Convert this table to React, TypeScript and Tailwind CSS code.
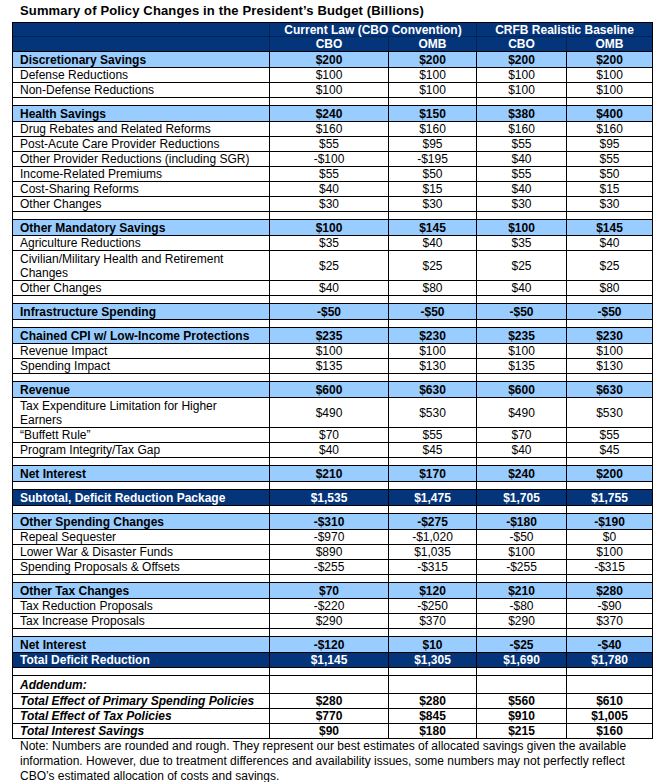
import React from "react";

type Kind = "sec" | "item" | "blank" | "navy" | "addHead" | "add";

type Row = {
  kind: Kind;
  label?: React.ReactNode;
  vals?: string[];
  h?: string;
};

const rows: Row[] = [
  { kind: "sec", label: "Discretionary Savings", vals: ["$200", "$200", "$200", "$200"] },
  { kind: "item", label: "Defense Reductions", vals: ["$100", "$100", "$100", "$100"] },
  { kind: "item", label: "Non-Defense Reductions", vals: ["$100", "$100", "$100", "$100"] },
  { kind: "blank" },
  { kind: "sec", label: "Health Savings", vals: ["$240", "$150", "$380", "$400"] },
  { kind: "item", label: "Drug Rebates and Related Reforms", vals: ["$160", "$160", "$160", "$160"] },
  { kind: "item", label: "Post-Acute Care Provider Reductions", vals: ["$55", "$95", "$55", "$95"] },
  { kind: "item", label: "Other Provider Reductions (including SGR)", vals: ["-$100", "-$195", "$40", "$55"] },
  { kind: "item", label: "Income-Related Premiums", vals: ["$55", "$50", "$55", "$50"] },
  { kind: "item", label: "Cost-Sharing Reforms", vals: ["$40", "$15", "$40", "$15"] },
  { kind: "item", label: "Other Changes", vals: ["$30", "$30", "$30", "$30"] },
  { kind: "blank" },
  { kind: "sec", label: "Other Mandatory Savings", vals: ["$100", "$145", "$100", "$145"] },
  { kind: "item", label: "Agriculture Reductions", vals: ["$35", "$40", "$35", "$40"] },
  {
    kind: "item",
    h: "h-[30px]",
    label: (
      <>
        Civilian/Military Health and Retirement
        <br />
        Changes
      </>
    ),
    vals: ["$25", "$25", "$25", "$25"],
  },
  { kind: "item", label: "Other Changes", vals: ["$40", "$80", "$40", "$80"] },
  { kind: "blank" },
  { kind: "sec", label: "Infrastructure Spending", vals: ["-$50", "-$50", "-$50", "-$50"] },
  { kind: "blank" },
  { kind: "sec", label: "Chained CPI w/ Low-Income Protections", vals: ["$235", "$230", "$235", "$230"] },
  { kind: "item", label: "Revenue Impact", vals: ["$100", "$100", "$100", "$100"] },
  { kind: "item", label: "Spending Impact", vals: ["$135", "$130", "$135", "$130"] },
  { kind: "blank" },
  { kind: "sec", label: "Revenue", vals: ["$600", "$630", "$600", "$630"] },
  {
    kind: "item",
    h: "h-[30px]",
    label: (
      <>
        Tax Expenditure Limitation for Higher
        <br />
        Earners
      </>
    ),
    vals: ["$490", "$530", "$490", "$530"],
  },
  { kind: "item", label: "\u201CBuffett Rule\u201D", vals: ["$70", "$55", "$70", "$55"] },
  { kind: "item", label: "Program Integrity/Tax Gap", vals: ["$40", "$45", "$40", "$45"] },
  { kind: "blank" },
  { kind: "sec", label: "Net Interest", vals: ["$210", "$170", "$240", "$200"] },
  { kind: "blank" },
  { kind: "navy", h: "h-[16px]", label: "Subtotal, Deficit Reduction Package", vals: ["$1,535", "$1,475", "$1,705", "$1,755"] },
  { kind: "blank" },
  { kind: "sec", label: "Other Spending Changes", vals: ["-$310", "-$275", "-$180", "-$190"] },
  { kind: "item", label: "Repeal Sequester", vals: ["-$970", "-$1,020", "-$50", "$0"] },
  { kind: "item", label: "Lower War & Disaster Funds", vals: ["$890", "$1,035", "$100", "$100"] },
  { kind: "item", label: "Spending Proposals & Offsets", vals: ["-$255", "-$315", "-$255", "-$315"] },
  { kind: "blank" },
  { kind: "sec", label: "Other Tax Changes", vals: ["$70", "$120", "$210", "$280"] },
  { kind: "item", label: "Tax Reduction Proposals", vals: ["-$220", "-$250", "-$80", "-$90"] },
  { kind: "item", label: "Tax Increase Proposals", vals: ["$290", "$370", "$290", "$370"] },
  { kind: "blank" },
  { kind: "sec", label: "Net Interest", vals: ["-$120", "$10", "-$25", "-$40"] },
  { kind: "navy", h: "h-[15px]", label: "Total Deficit Reduction", vals: ["$1,145", "$1,305", "$1,690", "$1,780"] },
  { kind: "blank" },
  { kind: "addHead", label: "Addendum:", vals: ["", "", "", ""] },
  { kind: "add", label: "Total Effect of Primary Spending Policies", vals: ["$280", "$280", "$560", "$610"] },
  { kind: "add", label: "Total Effect of Tax Policies", vals: ["$770", "$845", "$910", "$1,005"] },
  { kind: "add", label: "Total Interest Savings", vals: ["$90", "$180", "$215", "$160"] },
];

const grid = "grid grid-cols-[257px_119px_88px_90px_85px]";

function TableRow({ row }: { row: Row }) {
  const { kind } = row;
  let bg = "bg-white text-black";
  let h = row.h ?? "h-[15px]";
  let labelCls = "font-normal";
  let valCls = "font-normal";
  if (kind === "sec") {
    bg = "bg-[#99ccff] text-black";
    h = row.h ?? "h-[16px]";
    labelCls = "font-bold";
    valCls = "font-bold";
  } else if (kind === "navy") {
    bg = "bg-[#04347a] text-white";
    labelCls = "font-bold";
    valCls = "font-bold";
  } else if (kind === "blank") {
    h = "h-[8px]";
  } else if (kind === "addHead") {
    h = "h-[18px]";
    labelCls = "font-bold italic";
  } else if (kind === "add") {
    labelCls = "font-bold italic";
    valCls = "font-bold";
  }

  const vals = row.vals ?? ["", "", "", ""];

  return (
    <div className={`${grid} ${bg} ${h} border-b border-black`}>
      <div className="flex items-center border-r border-black pl-[7px] leading-[14px]">
        <span className={labelCls}>{row.label}</span>
      </div>
      {vals.map((v, i) => (
        <div key={i} className={`flex items-center justify-center leading-[14px] ${i < 3 ? "border-r border-black" : ""}`}>
          <span className={valCls}>{v}</span>
        </div>
      ))}
    </div>
  );
}

export default function App() {
  return (
    <div
      className="w-[663px] h-[782px] bg-white text-black text-[12px] overflow-hidden"
      style={{ fontFamily: '"Liberation Sans", Arial, sans-serif' }}
    >
      <div className="h-[22px] pl-[20px] pt-[3px] text-[13px] leading-[16px] font-bold tracking-[0.15px]">
        Summary of Policy Changes in the President&rsquo;s Budget (Billions)
      </div>

      <div className="ml-[12px] w-[641px] border-l border-t border-r border-black">
        {/* column headers */}
        <div className="grid grid-cols-[257px_207px_175px] h-[14px] bg-[#04347a] text-white font-bold border-b border-[#022454]">
          <div className="border-r border-[#022454]" />
          <div className="flex items-center justify-center leading-[14px] border-r border-[#022454]">
            Current Law (CBO Convention)
          </div>
          <div className="flex items-center justify-center leading-[14px]">CRFB Realistic Baseline</div>
        </div>
        <div className={`${grid} h-[15px] bg-[#04347a] text-white font-bold border-b border-black`}>
          <div className="border-r border-[#022454]" />
          <div className="flex items-center justify-center leading-[14px] border-r border-[#022454]">CBO</div>
          <div className="flex items-center justify-center leading-[14px] border-r border-[#022454]">OMB</div>
          <div className="flex items-center justify-center leading-[14px] border-r border-[#022454]">CBO</div>
          <div className="flex items-center justify-center leading-[14px]">OMB</div>
        </div>

        {rows.map((r, i) => (
          <TableRow key={i} row={r} />
        ))}
      </div>

      <div className="pl-[20px] pr-[20px] leading-[15px] text-[12px]">
        Note: Numbers are rounded and rough. They represent our best estimates of allocated savings given the available
        information. However, due to treatment differences and availability issues, some numbers may not perfectly reflect
        CBO&rsquo;s estimated allocation of costs and savings.
      </div>
    </div>
  );
}
